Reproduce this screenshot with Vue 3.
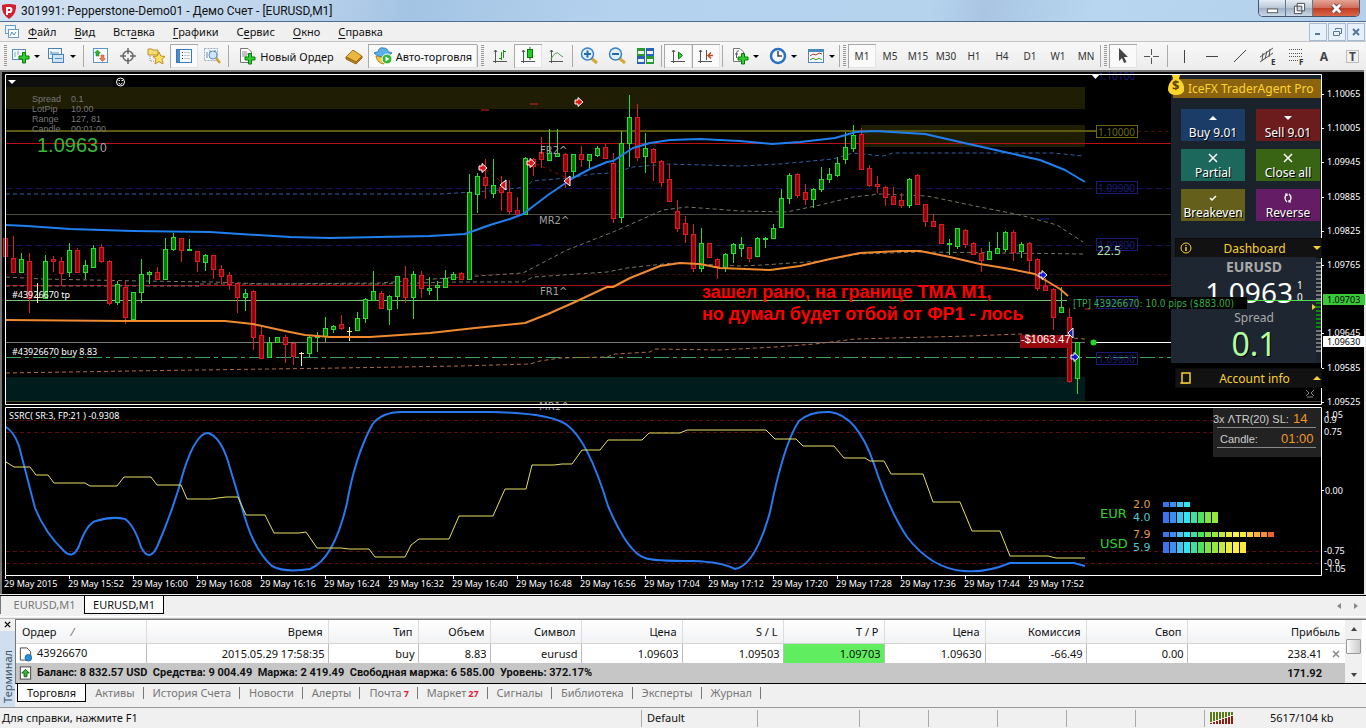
<script setup>
import { ref } from 'vue'

const menu = [['', 'Ф', 'айл'], ['', 'В', 'ид'], ['Вст', 'а', 'вка'], ['', 'Г', 'рафики'], ['С', 'е', 'рвис'], ['', 'О', 'кно'], ['', 'С', 'правка']]
const frames = ['M1', 'M5', 'M15', 'M30', 'H1', 'H4', 'D1', 'W1', 'MN']
const frame = ref('M1')

// colour, high, body top, body bottom, low
const raw = `r238,238,256,256 r236,258,272,273 g253,259,272,273 r253,261,298,313 y283,297,297,303 g255,261,298,299 r256,259,261,272 r257,261,273,286
g243,250,272,277 r248,250,272,273 g260,265,272,279 g245,248,267,267 r244,247,261,263 r260,261,303,305 g281,284,302,305 r281,287,317,324 g292,292,319,319
g259,274,292,303 g271,272,274,284 r267,272,279,280 g238,249,279,279 g233,237,249,251 r238,238,250,262 g239,249,250,251 r251,251,261,272 g254,255,262,271
r255,255,269,279 r265,269,276,284 r272,275,284,290 r283,283,297,313 g289,293,297,311 r290,291,337,350 r327,335,358,358 g337,342,357,358 g337,337,342,342
r335,337,344,363 r343,343,356,365 y352,353,353,366 g335,337,353,357 g332,336,337,352 g317,328,336,342 g325,326,329,333 r315,324,328,330 y327,331,331,341
g312,318,330,331 g298,299,318,323 g271,291,300,301 r291,293,308,308 g295,296,309,325 g276,276,296,309 r266,278,297,303 g271,274,297,319 r271,275,288,298
g277,288,290,295 g281,285,287,301 g270,278,287,287 g272,274,279,279 r272,273,279,280 g174,192,279,279 g173,176,194,213 r159,177,185,199 g159,185,193,198
r176,187,192,211 r180,192,211,214 r197,210,214,216 g157,158,214,215 r158,159,166,176 r137,152,159,168 g129,153,160,160 g129,153,156,157 r153,154,171,188
g154,154,171,177 r146,154,159,167 g154,154,160,169 g146,148,155,157 r144,147,158,158 r153,163,218,223 g131,143,217,223 g95,117,143,167 r104,117,157,161
g133,148,156,173 r148,149,162,181 r160,161,182,187 r164,179,201,201 r200,211,228,232 r216,223,234,243 r224,234,268,272 g228,243,268,272 r243,243,257,258
r258,259,266,279 g253,254,267,272 g243,244,253,263 g237,244,248,257 r247,247,258,262 g237,238,256,256 g237,238,239,248 g224,228,238,239 g189,198,227,227
g173,175,198,204 r173,174,195,198 r184,192,199,205 g188,189,199,208 g167,179,189,192 g168,174,179,183 g157,163,175,177 g132,147,159,164 g125,135,148,152
r128,134,169,169 r165,168,185,187 r176,184,186,193 r186,187,197,206 r187,196,204,205 r193,200,205,208 g178,179,205,208 r174,175,204,204 r204,204,221,227
r214,221,226,227 r224,224,243,244 g239,243,244,255 g228,228,246,249 r229,230,244,248 r242,243,254,254 r248,253,260,272 g242,251,259,260 g232,248,253,254
g231,232,249,252 r230,232,252,261 g242,244,251,258 r242,243,260,272 r258,259,288,291 r278,286,290,290 r288,289,317,330 g287,307,312,312 r308,317,381,383
g342,342,378,394`
const candles = raw.split(/\s+/).map((s, i) => {
  const [high, top, bottom, low] = s.slice(1).split(',').map(Number)
  return { x: 5 + i * 8, kind: s[0], high, top, low, h: Math.max(bottom - top, 1) }
})

const prices = [[94, '1.10065'], [128, '1.10005'], [162, '1.09945'], [197, '1.09885'], [231, '1.09825'], [265, '1.09765'], [333, '1.09645'], [368, '1.09585'], [402, '1.09525']]
const times = Array.from({ length: 17 }, (_, i) => {
  if (i === 0) return '29 May 2015'
  const m = 15 * 60 + 52 + (i - 1) * 8
  return `29 May ${Math.floor(m / 60)}:${String(m % 60).padStart(2, '0')}`
})
const rounds = [[132, '1.10000', '#6b6a10'], [188, '1.09900', '#1c1c78'], [245, '1.09800', '#1c1c78'], [303, '1.09700', '#1c1c78'], [359, '1.09600', '#1c1c78']]
const heat = ['#3c74ee', '#3a90f0', '#3cc4f4', '#30e4f0', '#3ce0a0', '#4ce060', '#7ce444', '#98e83c', '#c4e83c', '#e8ec40', '#fcf040', '#fce83c', '#fcd03c', '#f8b038', '#f09034', '#ee6434']
const meters = [[502, 5, 4], [512, 11, 8], [532, 5, 16], [542, 11, 12]]

const cols = [130, 182, 90, 72, 91, 101, 101, 101, 101, 101, 101]
const head = ['Время', 'Тип', 'Объем', 'Символ', 'Цена', 'S / L', 'T / P', 'Цена', 'Комиссия', 'Своп']
const row = ['2015.05.29 17:58:35', 'buy', '8.83', 'eurusd', '1.09603', '1.09503', '1.09703', '1.09630', '-66.49', '0.00']
const tabs = [['Торговля'], ['Активы'], ['История Счета'], ['Новости'], ['Алерты'], ['Почта', 7], ['Маркет', 27], ['Сигналы'], ['Библиотека'], ['Эксперты'], ['Журнал']]
</script>

<template>
  <div class="app">
    <header class="title">
      <svg class="logo" viewBox="0 0 16 16"><path d="M1 2Q8 0 15 2Q16 11 8 16Q0 11 1 2" fill="#d5202c" /><path d="M6 12V5H9.5Q11.500 7 9.500 9H6" fill="none" stroke="#fff" stroke-width="2" /></svg>
      <h1>301991: Pepperstone-Demo01 - Демо Счет - [EURUSD,M1]</h1>
      <div class="winbtns">
        <button aria-label="Свернуть"><svg viewBox="0 0 14 14"><rect x="1.500" y="7.500" width="11" height="4" fill="#fff" stroke="#555" /></svg></button>
        <button aria-label="Развернуть"><svg viewBox="0 0 14 14"><path d="M4.500 1.500H12.500V9.500H9.500V12.500H1.500V4.500H4.500Z" fill="#fff" stroke="#444" /><path d="M4.500 4.500H9.500V9.500H4.500Z" fill="#cdd8e4" stroke="#444" /></svg></button>
        <button class="close" aria-label="Закрыть"><svg viewBox="0 0 14 14"><path d="M3 3L11 11M11 3L3 11" stroke="#644" stroke-width="5" /><path d="M3 3L11 11M11 3L3 11" stroke="#fff" stroke-width="3" /></svg></button>
      </div>
    </header>

    <nav class="menu">
      <svg class="doc" viewBox="0 0 16 16"><rect x="1.500" y="1.500" width="10" height="8" fill="#eef6ff" stroke="#6a9cc8" /><rect x="4.500" y="5.500" width="10" height="8" fill="#fff" stroke="#6a9cc8" /><path d="M6 12L8 8L10 11L12 8" fill="none" stroke="#5588bb" /></svg>
      <button v-for="m in menu" :key="m.join('')">{{ m[0] }}<u>{{ m[1] }}</u>{{ m[2] }}</button>
      <div class="mdi">
        <button aria-label="Свернуть окно"><svg viewBox="0 0 12 12"><path d="M3 8H8" stroke="#56789a" stroke-width="2" /></svg></button>
        <button aria-label="Восстановить окно"><svg viewBox="0 0 12 12"><path d="M4.500 4V2.500H10.500V7.500H9M2.500 5.500H8.500V9.500H2.500Z" fill="none" stroke="#56789a" /></svg></button>
        <button aria-label="Закрыть окно"><svg viewBox="0 0 12 12"><path d="M3 3L9 9M9 3L3 9" stroke="#56789a" stroke-width="2" /></svg></button>
      </div>
    </nav>

    <div class="toolbar">
      <i class="grip first"></i>
      <button class="drop" aria-label="Новый график"><svg viewBox="0 0 20 20"><rect x="1.500" y="3.500" width="13" height="10" fill="#f4faff" stroke="#5a8fc0" /><path d="M4 6V11M7 5V9" stroke="#7aa" /><path d="M8 10H11.500V6.500H14.500V10H18V13H14.500V17H11.500V13H8Z" fill="#2fd12f" stroke="#0a7a0a" /></svg></button>
      <button class="drop" aria-label="Профили"><svg viewBox="0 0 20 20"><rect x="1.500" y="2.500" width="13" height="10" fill="#f0f8ff" stroke="#4a80b4" /><rect x="5.500" y="8.500" width="11" height="8" fill="#cfe4f8" stroke="#4a80b4" /><path d="M4 7H12M4 5V9M8 12.500H15" stroke="#5a8fc0" /></svg></button>
      <i class="sep"></i>
      <button aria-label="Обзор рынка"><svg viewBox="0 0 20 20"><rect x="3.500" y="2.500" width="14" height="14" fill="#fff" stroke="#5a94cc" /><path d="M7.500 4L10.500 7H9V10H6V7H4.500Z" fill="#30b030" stroke="#108010" stroke-width=".5" /><path d="M12.500 15.500L9.500 12.500H11V9H14V12.500H15.500Z" fill="#f08060" stroke="#c03010" stroke-width=".5" /></svg></button>
      <button aria-label="Окно данных"><svg viewBox="0 0 20 20"><circle cx="10" cy="10" r="5" fill="none" stroke="#666" stroke-width="1.500" /><path d="M10 2V8M10 12V18M2 10H8M12 10H18" stroke="#666" stroke-width="1.500" /></svg></button>
      <button aria-label="Навигатор"><svg viewBox="0 0 20 20"><path d="M2 3H6L7 4H12V9H2Z" fill="#f8dc70" stroke="#b89030" /><path d="M4 10V15H8" fill="none" stroke="#888" stroke-dasharray="1 1" /><path d="M13 6L14.800 10L19 10.500L16 13.200L17 18L13 15.500L9 18L10 13.200L7 10.500L11.200 10Z" fill="#ffe060" stroke="#c09020" /></svg></button>
      <button class="on" aria-label="Терминал"><svg viewBox="0 0 20 20"><rect x="2.500" y="3.500" width="15" height="13" fill="#f6fbff" stroke="#3a78c0" /><path d="M3 4H6V16H3Z" fill="#4a88d0" /><path d="M8 6.500H9M8 9.500H9M8 12.500H9" stroke="#333" /><path d="M10 6.500H16M10 9.500H16M10 12.500H16" stroke="#bcd" /></svg></button>
      <button aria-label="Тестер"><svg viewBox="0 0 20 20"><rect x="2.500" y="2.500" width="13" height="12" fill="#f4f8fc" stroke="#9ab" stroke-dasharray="2 1" /><path d="M5 12V6M8 9V4M13 8V4" stroke="#68a" /><circle cx="11" cy="9" r="4" fill="#cfe6fa" stroke="#5a8ac0" /><path d="M14 12L18 17" stroke="#d0a030" stroke-width="2.500" /></svg></button>
      <i class="sep"></i>
      <button class="wide"><svg viewBox="0 0 20 20"><path d="M3.500 2.500H11L14.500 6V16.500H3.500Z" fill="#fff" stroke="#777" /><path d="M5 6H10M5 8H12M5 10H10" stroke="#888" /><path d="M8 11H11.500V7.500H14.500V11H18V14H14.500V18H11.500V14H8Z" fill="#2fd12f" stroke="#0a7a0a" /></svg>Новый Ордер</button>
      <button aria-label="MetaEditor"><svg viewBox="0 0 20 20"><path d="M2 11L9 4L18 10L12 16Z" fill="#e8b840" stroke="#a87818" /><path d="M2 11V13L12 18L18 12V10L12 16Z" fill="#c08820" stroke="#946410" /></svg></button>
      <button class="wide on auto"><svg viewBox="0 0 20 20"><path d="M1 7Q3 6 5 6Q6 1 10 2Q15 2 15 6Q18 6 19 7Q15 11 10 11Q4 11 1 7" fill="#5ab0ea" stroke="#3880b8" /><path d="M3 10Q9 13 14 10L11 18Q4 17 3 10" fill="#f0c850" stroke="#b88820" /><circle cx="14" cy="13" r="5" fill="#30b830" stroke="#fff" /><path d="M12.500 10.500L16.500 13L12.500 15.500Z" fill="#fff" /></svg>Авто-торговля</button>
      <i class="grip"></i>
      <button aria-label="Бары"><svg viewBox="0 0 20 20"><path d="M5.500 4V17M3 15.500H17M4 6L5.500 4L7 6" stroke="#555" fill="none" /><path d="M9 12.500H11.500M11.500 6V14M13.500 4V12M13.500 5.500H16" stroke="#189018" /></svg></button>
      <button class="on" aria-label="Свечи"><svg viewBox="0 0 20 20"><path d="M5.500 4V17M3 15.500H17M4 6L5.500 4L7 6" stroke="#555" fill="none" /><path d="M12 1V14" stroke="#087808" /><rect x="9.500" y="3.500" width="5" height="8" fill="#20d020" stroke="#087808" /></svg></button>
      <button aria-label="Линия"><svg viewBox="0 0 20 20"><path d="M5.500 4V17M3 15.500H17M4 6L5.500 4L7 6" stroke="#555" fill="none" /><path d="M5 13Q10 4 13 8L17 11" fill="none" stroke="#50a050" /></svg></button>
      <i class="sep"></i>
      <button aria-label="Увеличить"><svg viewBox="0 0 20 20"><path d="M12 12L18 17" stroke="#d8a830" stroke-width="3" /><circle cx="8.500" cy="8" r="6" fill="#dff0ff" stroke="#3a80c8" stroke-width="1.500" /><path d="M5 8H12M8.500 4.500V11.500" stroke="#2468b0" stroke-width="2" /></svg></button>
      <button aria-label="Уменьшить"><svg viewBox="0 0 20 20"><path d="M12 12L18 17" stroke="#d8a830" stroke-width="3" /><circle cx="8.500" cy="8" r="6" fill="#dff0ff" stroke="#3a80c8" stroke-width="1.500" /><path d="M5 8H12" stroke="#2468b0" stroke-width="2" /></svg></button>
      <button aria-label="Окна плиткой"><svg viewBox="0 0 20 20"><path d="M2 2H10V10H2ZM11 10H19V18H11Z" fill="#2a9a30" /><path d="M11 2H19V10H11ZM2 10H10V18H2Z" fill="#2c60b8" /><path d="M3 5H9V8H3ZM12 5H18V8H12ZM3 13H9V16H3ZM12 13H18V16H12Z" fill="#e8f4ec" /></svg></button>
      <i class="sep"></i>
      <button class="on" aria-label="Автопрокрутка"><svg viewBox="0 0 20 20"><path d="M5.500 4V17M3 15.500H17M4 6L5.500 4L7 6" stroke="#555" fill="none" /><path d="M10.500 6L14.500 9.500L10.500 13Z" fill="#30d030" stroke="#108010" /></svg></button>
      <button class="on" aria-label="Сдвиг графика"><svg viewBox="0 0 20 20"><path d="M4.500 4V17M2 15.500H16M3 6L4.500 4L6 6M10.500 4V14" stroke="#555" fill="none" /><path d="M17 9.500H12M15 6.500L12 9.500L15 12.500" fill="none" stroke="#c04820" stroke-width="1.500" /></svg></button>
      <i class="sep"></i>
      <button class="drop mid" aria-label="Индикаторы"><svg viewBox="0 0 20 20"><path d="M3.500 2.500H10L13.500 6V15.500H3.500Z" fill="#fff" stroke="#777" /><path d="M9 5Q6.500 4 6.500 8V12M5 8H8" fill="none" stroke="#555" /><path d="M8 11H11.500V7.500H14.500V11H18V14H14.500V18H11.500V14H8Z" fill="#2fd12f" stroke="#0a7a0a" /></svg></button>
      <button class="drop mid" aria-label="Периоды"><svg viewBox="0 0 20 20"><circle cx="10" cy="10" r="7" fill="#f4faff" stroke="#2a70c0" stroke-width="2.500" /><path d="M10 5V10H14" fill="none" stroke="#444" stroke-width="1.500" /></svg></button>
      <button class="drop mid" aria-label="Шаблоны"><svg viewBox="0 0 20 20"><rect x="2.500" y="3.500" width="15" height="13" fill="#fff" stroke="#4a88c0" /><path d="M3 5H17" stroke="#4a88c0" stroke-width="2" /><path d="M4 10L7 8L10 9L13 7L16 8" fill="none" stroke="#b03030" /><path d="M4 14L7 12L10 14L13 12L16 14" fill="none" stroke="#309030" /></svg></button>
      <i class="grip"></i>
      <button v-for="f in frames" :key="f" class="tf" :class="{ on: f === frame }" @click="frame = f">{{ f }}</button>
      <i class="grip"></i>
      <button class="on" aria-label="Курсор"><svg viewBox="0 0 20 20"><path d="M6 2L15 11H11L13.500 16L11 17L9 12L6 15Z" fill="#444" /></svg></button>
      <button aria-label="Перекрестие"><svg viewBox="0 0 20 20"><path d="M10.500 3V9M10.500 12V18M3 10.500H9M12 10.500H18" stroke="#555" /></svg></button>
      <i class="sep"></i>
      <button aria-label="Вертикальная линия"><svg viewBox="0 0 20 20"><path d="M10.500 4V17" stroke="#444" /></svg></button>
      <button aria-label="Горизонтальная линия"><svg viewBox="0 0 20 20"><path d="M4 10.500H16" stroke="#444" /></svg></button>
      <button aria-label="Трендовая линия"><svg viewBox="0 0 20 20"><path d="M4 16L16 4" stroke="#444" /></svg></button>
      <button aria-label="Канал"><svg viewBox="0 0 20 20"><path d="M2 11L15 2M2 16L15 7M5 7L4 15M9 5L7 13M12 3L11 11" stroke="#555" /><text x="13" y="19" font-size="8" font-weight="700" fill="#333">E</text></svg></button>
      <button aria-label="Фибоначчи"><svg viewBox="0 0 20 20"><path d="M3 3.500H17M3 7.500H17M3 10.500H17M3 14.500H12" stroke="#555" stroke-dasharray="1 1" /><text x="13" y="19" font-size="8" font-weight="700" fill="#333">F</text></svg></button>
      <button class="letter" aria-label="Текст">A</button>
      <button aria-label="Метка"><svg viewBox="0 0 20 20"><rect x="4.500" y="4.500" width="12" height="12" fill="none" stroke="#888" stroke-dasharray="1 1" /><text x="7" y="15" font-size="12" font-weight="700" fill="#444">T</text></svg></button>
    </div>

    <main class="chart">
      <svg class="plot" viewBox="0 70 1366 526">
        <rect y="70" width="1366" height="526" fill="#e8e8e8" />
        <rect y="70" width="1364" height="2" fill="#777" /><rect y="70" width="2" height="524" fill="#777" />
        <rect x="2" y="72" width="1362" height="522" fill="#000" />
        <rect y="595" width="1366" height="1" fill="#000" />

        <rect x="6" y="87" width="1079" height="22" fill="#1f1d04" />
        <rect x="861" y="125" width="224" height="22" fill="#1f1d04" />
        <rect x="6" y="377" width="1079" height="24" fill="#001c1c" />
        <g fill="none">
          <path d="M6 131H1096" stroke="#5c5a10" stroke-width="2" />
          <path d="M1137 131.500H1171" stroke="#420c0c" stroke-dasharray="4 3" />
          <path d="M6 143.500H1171" stroke="#b81014" />
          <path d="M6 188.500H1171M6 245.500H1171" stroke="#141456" stroke-dasharray="6 4" />
          <path d="M6 214.500H1171" stroke="#4c4c38" />
          <path d="M6 274.500H1171" stroke="#420c0c" stroke-dasharray="3 3" />
          <path d="M6 285.500H1171" stroke="#a80e1a" />
          <path d="M6 300.500H1067" stroke="#74c474" />
          <path d="M6 342.500H1085" stroke="#777" />
          <path d="M1093 342.500H1171" stroke="#fff" />
          <path d="M6 357.500H1171" stroke="#3aa458" stroke-dasharray="15 4 4 4" />
          <path d="M6 401.500H1321" stroke="#4a4224" />
          <g stroke-dasharray="4 3">
            <path d="M6 194L440 194L490 191L527 187L532 181L567 178L593 174L613 173L633 167L667 164L740 166L780 164L833 159L853 153L883 156L893 153L1053 153L1083 156" stroke="#3060a8" />
            <path d="M6 277L43 279L140 281L213 282L267 284L380 283L447 278L523 273L567 250L613 232L663 210L687 207L740 211L787 212L820 205L853 197L880 194L927 196L980 207L1020 215L1057 225L1083 242" stroke="#777768" />
            <path d="M6 286L200 286M200 284L380 284L457 282L523 282L533 277L607 272L627 268L673 263L740 266L763 265L820 261L860 254L920 252L1083 254" stroke="#777768" />
            <path d="M6 373L130 371L340 368L460 366L530 364L540 361L560 358L607 357L615 354L650 352L655 349L720 350L775 347L815 344L855 339L970 336L1020 334L1085 339" stroke="#b06c40" />
          </g>
          <path d="M530 161L567 178M486 170L503 183" stroke="#8a1010" stroke-dasharray="3 4" />
        </g>

        <g v-for="c in candles" :key="c.x" :stroke="{ r: '#d81c24', g: '#30d830', y: '#fff080' }[c.kind]" :fill="c.kind === 'r' ? '#90060c' : '#067c06'">
          <path :d="`M${c.x + .5} ${c.high}V${c.low}`" />
          <path v-if="c.kind === 'y'" :d="`M${c.x - 2} ${c.top + .5}H${c.x + 3}`" />
          <rect v-else :x="c.x - 1.5" :y="c.top + .5" width="4" :height="c.h" />
        </g>

        <g fill="none" stroke-linejoin="round">
          <path stroke="#2080f0" stroke-width="2" d="M6 225L27 226L70 229L133 231L210 232L240 234L290 237L330 238L380 237L430 236L465 234L490 225L510 219L523 214L548 195L573 178L590 169L607 162L613 161L633 148L650 143L670 140L700 139L740 141L772 144L800 142L835 138L856 132L875 131L925 134L960 142L1000 151L1040 160L1065 170L1085 182" />
          <path stroke="#f08a30" stroke-width="2" d="M6 320L125 321L225 321L253 324L285 331L305 335L330 337L370 337L400 335L430 333L475 328L525 323L548 314L575 302L607 287L613 287L630 278L660 266L680 263L700 264L720 268L770 270L800 266L830 259L860 253L900 251L920 251L950 257L980 264L1010 269L1035 274L1045 280L1060 289L1068 296" />
        </g>
        <path d="M481 110H489M530 104H538M1085 309H1090" stroke="#e02020" /><path d="M531 245H541M1040 219H1049" stroke="#1818a0" />

        <g v-for="p in [[483, 168], [531, 163], [579, 102]]" :key="p[0]" :transform="`translate(${p[0]} ${p[1]})`"><path d="M-4 -2V2H-1V4.500L4 0L-1 -4.500V-2Z" fill="#e01818" stroke="#fff" /></g>
        <g v-for="p in [[503, 185], [567, 181]]" :key="p[0]" :transform="`translate(${p[0]} ${p[1]})`"><path d="M-3 0L3 -5V5Z" fill="#d01818" stroke="#fff" /></g>

        <g class="pivot"><text x="540" y="154">FR2^</text><text x="539" y="224">MR2^</text><text x="540" y="295">FR1^</text><text x="539" y="410">MR1^</text></g>
        <g class="axis"><text x="12" y="298">#43926670 tp</text><text x="12" y="355">#43926670 buy 8.83</text></g>
        <g class="note"><text x="702" y="298">зашел рано, на границе ТМА М1,</text><text x="702" y="320">но думал будет отбой от ФР1 - лось</text></g>

        <rect x="6" y="77" width="107" height="10" fill="#0e0e10" />
        <path d="M8 80H16L12 84Z" fill="#fff" /><path d="M1091 74H1100L1095.500 79Z" fill="#fff" />
        <circle cx="120.500" cy="82" r="4" fill="none" stroke="#fff" /><path d="M118.500 80.500H120M121.500 80.500H123M118.500 83Q120.500 86 122.500 83" fill="none" stroke="#fff" />
        <g class="info">
          <text x="32" y="102">Spread</text><text x="71" y="102">0.1</text><text x="32" y="112">LotPip</text><text x="71" y="112">10.00</text>
          <text x="32" y="122">Range</text><text x="71" y="122">127, 81</text><text x="32" y="132">Candle</text><text x="71" y="132">00:01:00</text>
        </g>
        <text class="bid" x="37" y="152">1.0963</text><text class="bid-small" x="100" y="152">0</text>

        <g v-for="r in rounds" :key="r[1]"><rect x="1096.500" :y="r[0] - 6.5" width="41" height="12" fill="none" :stroke="r[2]" /><text x="1098" :y="r[0] + 4" class="round" :fill="r[2]">{{ r[1] }}</text></g>
        <text class="round" x="1098" y="80" fill="#1c1c78">1.10100</text>
        <text x="1097" y="255" class="pips">22.5</text>

        <rect x="1020" y="335" width="51" height="13" fill="#96080e" /><text x="1021" y="343" class="loss">-$1063.47</text>
        <g v-for="p in [[1043, 275], [1075, 357]]" :key="p[0]" :transform="`translate(${p[0]} ${p[1]})`"><path d="M-4 -2V2H-1V4.500L4 0L-1 -4.500V-2Z" fill="#1818d0" stroke="#fff" /></g>
        <path d="M1068 333L1073 328V338Z" fill="#1818d0" stroke="#fff" />
        <circle cx="1093.500" cy="342.500" r="3" fill="#20d820" />

        <rect x="2" y="405" width="1319" height="3" fill="#000" />
        <g fill="none" stroke-width="1">
          <path d="M6 420.500H1321M6 432.500H1321M6 551.500H1321M6 563.500H1321" stroke="#5c0c14" stroke-dasharray="4 3" />
          <path stroke="#2878f0" stroke-width="2" d="M6 427Q14 432 19 446L35 508Q45 533 64 551Q73 560 79 546Q87 523 96 521Q112 516 125 519Q134 525 141 547Q149 563 157 547Q174 508 184 470Q196 433 208 433Q219 436 227 458L245 518Q255 551 272 566Q285 573 310 569Q334 559 347 503Q355 457 372 425Q381 412 402 412L490 412Q550 413 567 425Q588 440 608 506Q628 553 645 558Q652 561 693 561Q722 562 735 569Q755 566 770 512Q784 443 799 421Q810 411 830 412Q857 415 874 464Q889 510 907 537Q932 569 964 571Q986 573 1010 563H1074L1085 566" />
          <path stroke="#e8e060" d="M6 462L14 467H30L36 475H48L54 483H85L90 486H117L124 477H151L157 485H181L187 499H211L218 498L226 497H238L246 515H265L274 533H299L306 532L317 548H341L349 549H369L375 557H405L411 545L419 539H440L449 539L459 516H493L505 489H526L532 465H554L562 464H572L582 450H600L608 440H632L642 440L649 433H680L687 430H766L775 439H796L803 446H834L844 458H865L870 461H884L891 474H923L933 502H960L972 531H1000L1010 556H1048L1056 558H1085" />
          <path stroke="#fff" d="M5.500 404.500V74.500H1321.500V404.500ZM5.500 575.500V407.500H1321.500V575.500Z" />
          <path stroke="#fff" d="M1321 490.500H1324" />
        </g>
        <g class="axis">
          <text x="9" y="419">SSRC( SR:3, FP:21 ) -0.9308</text>
          <g v-for="p in prices" :key="p[0]"><path :d="`M1322 ${p[0] + .5}H1324`" stroke="#fff" /><text x="1327" :y="p[0] + 3">{{ p[1] }}</text></g>
          <rect x="1323" y="294" width="42" height="11" fill="#38c838" /><text class="dark" x="1327" y="303">1.09703</text>
          <rect x="1323" y="336" width="42" height="11" fill="#fff" /><text class="dark" x="1327" y="345">1.09630</text>
          <text x="1325" y="418">1.05</text><text x="1324" y="423">0.9</text><text x="1324" y="435">0.75</text><text x="1325" y="494">0.00</text><text x="1324" y="554">-0.75</text><text x="1324" y="566">-0.9</text><text x="1325" y="572">-1.05</text>
          <g v-for="(t, i) in times" :key="t"><text :x="4 + i * 64" y="587">{{ t }}</text><path :d="`M${5.5 + i * 64} 576V579`" stroke="#fff" /></g>
        </g>

        <g class="cur"><text x="1100" y="518">EUR</text><text x="1100" y="548">USD</text></g>
        <g class="strength"><text x="1133" y="508" fill="#e09a48">2.0</text><text x="1133" y="521" fill="#50c8d0">4.0</text><text x="1133" y="538" fill="#e09a48">7.9</text><text x="1133" y="551" fill="#50c8d0">5.9</text></g>
        <g v-for="m in meters" :key="m[0]"><rect v-for="n in m[2]" :key="n" :x="1156 + n * 7" :y="m[0]" width="6" :height="m[1]" :fill="heat[n - 1]" /></g>
        <rect x="1213" y="408" width="108" height="49" fill="#222" />
        <g class="atr"><text x="1213" y="423">3x ΛTR(20) SL:</text><text x="1220" y="443">Candle:</text><text class="num" x="1293" y="423">14</text><text class="num" x="1281" y="443">01:00</text></g>
        <path d="M1217 427.500H1316M1217 447.500H1316" stroke="#888" />
      </svg>

      <aside class="agent">
        <div class="agent-title"><svg viewBox="0 0 18 22"><path d="M5 1H13L12 5Q18 9 17 17Q15 21 9 21Q2 21 1 16Q1 9 6 5Z" fill="#fcd42c" /><text x="5" y="16" font-size="13" font-weight="700" fill="#5a4208">$</text></svg>IceFX TraderAgent Pro</div>
        <div class="agent-grid">
          <button class="buy"><svg viewBox="0 0 12 12"><path d="M2 8L6 4L10 8Z" fill="#fff" /></svg>Buy 9.01</button>
          <button class="sell"><svg viewBox="0 0 12 12"><path d="M2 4H10L6 8Z" fill="#fff" /></svg>Sell 9.01</button>
          <button class="partial"><svg viewBox="0 0 12 12"><path d="M2 2L10 10M10 2L2 10" stroke="#fff" stroke-width="1.500" /></svg>Partial</button>
          <button class="all"><svg viewBox="0 0 12 12"><path d="M2 2L10 10M10 2L2 10" stroke="#fff" stroke-width="1.500" /></svg>Close all</button>
          <button class="even"><svg viewBox="0 0 12 12"><path d="M3 6L5 8L9 4" fill="none" stroke="#fff" stroke-width="1.500" /></svg>Breakeven</button>
          <button class="rev"><svg viewBox="0 0 12 12"><path d="M5 2Q1 6 5 10M7 2Q11 6 7 10M3 2H5V4M9 10H7V8" fill="none" stroke="#fff" stroke-width="1.200" /></svg>Reverse</button>
        </div>
        <button class="fold"><svg viewBox="0 0 12 12"><circle cx="6" cy="6" r="5" fill="none" stroke="#f8d030" /><path d="M6 3V4M6 5V9" stroke="#f8d030" stroke-width="1.500" /></svg><span>Dashboard</span><svg class="arr" viewBox="0 0 8 8"><path d="M0 2H8L4 6Z" fill="#f8d030" /></svg></button>
        <div class="dash">
          <b>EURUSD</b>
          <div class="quote">1.0963<span>1<br>0</span></div>
          <p>Spread</p>
          <strong>0.1</strong>
        </div>
        <button class="fold info-fold"><svg viewBox="0 0 12 12"><path d="M2 1H10V11H2Z" fill="none" stroke="#f8d030" stroke-width="1.500" /><path d="M1 10V12H8" stroke="#f8d030" fill="none" /></svg><span>Account info</span><svg class="arr" viewBox="0 0 8 8"><path d="M0 6H8L4 2Z" fill="#f8d030" /></svg></button>
      </aside>

      <svg class="plot over" viewBox="0 70 1366 526">
        <g><rect v-for="n in 23" :key="n" x="1316" :y="258 + n * 4" width="5" height="2" :fill="n > 10 && n < 18 ? '#0a8a0a' : '#777'" /></g>
        <path d="M1312 304V310L1316 307Z" fill="#e8d020" />
        <rect x="1171" y="297" width="76" height="12" fill="#020402" /><path d="M1247 300.500H1321" stroke="#50e050" />
        <text class="tp" x="1073" y="307">[TP] 43926670: 10.0 pips ($883.00)</text>
        <path d="M1306 390L1309 393L1306 396M1314 390L1311 393L1314 396M1307 397H1313" fill="none" stroke="#888" />
      </svg>
    </main>

    <div class="chart-tabs"><button>EURUSD,M1</button><button class="active">EURUSD,M1</button><span class="scroll"><svg viewBox="0 0 6 8"><path d="M5 1V7L1 4Z" fill="#888" /></svg><svg viewBox="0 0 6 8"><path d="M1 1V7L5 4Z" fill="#888" /></svg></span></div>

    <section class="terminal">
      <div class="side"><button aria-label="Закрыть терминал"><svg viewBox="0 0 8 8"><path d="M1 1L7 7M7 1L1 7" stroke="#000" stroke-width="1.500" /></svg></button><span>Терминал</span></div>
      <div class="orders">
        <div class="grid">
          <table>
            <colgroup><col v-for="(c, i) in cols" :key="i" :style="{ width: c + 'px' }"><col></colgroup>
            <thead><tr><th class="left">Ордер<em>/</em></th><th v-for="(h, i) in head" :key="i">{{ h }}</th><th class="profit">Прибыль</th></tr></thead>
            <tbody>
              <tr><td class="left"><svg viewBox="0 0 16 16"><path d="M2.500 1.500H9.500L13.500 5.500V14.500H2.500Z" fill="#fff" stroke="#444" /><circle cx="11" cy="12" r="3.500" fill="#2a90d8" stroke="#1a68a8" /></svg>43926670</td><td v-for="(v, i) in row" :key="i" :class="{ hit: i === 6 }">{{ v }}</td><td class="profit">238.41<button aria-label="Закрыть ордер"><svg viewBox="0 0 8 8"><path d="M1 1L7 7M7 1L1 7" stroke="#888" stroke-width="1.500" /></svg></button></td></tr>
              <tr class="sum"><td colspan="11" class="left"><svg viewBox="0 0 16 16"><rect x="2.500" y="1.500" width="11" height="13" fill="#fff" stroke="#444" /><path d="M8 4L12 8H9.500V12H6.500V8H4Z" fill="#3ab83a" stroke="#0a600a" /></svg>Баланс: 8 832.57 USD&nbsp; Средства: 9 004.49&nbsp; Маржа: 2 419.49&nbsp; Свободная маржа: 6 585.00&nbsp; Уровень: 372.17%</td><td class="profit total">171.92</td></tr>
            </tbody>
          </table>
          <div class="bar"><svg viewBox="0 0 8 6"><path d="M1 5L4 1L7 5Z" fill="#444" /></svg><i></i><svg class="end" viewBox="0 0 8 6"><path d="M1 1L4 5L7 1Z" fill="#444" /></svg></div>
        </div>
        <div class="tabs"><button v-for="(t, i) in tabs" :key="t[0]" :class="{ active: i === 0 }">{{ t[0] }}<b v-if="t[1]">{{ t[1] }}</b></button></div>
      </div>
    </section>

    <footer><span class="help">Для справки, нажмите F1</span><span class="c1">Default</span><span class="c2"></span><span v-for="n in 5" :key="n" class="c3"></span><span class="net"><svg viewBox="0 0 24 14"><g v-for="n in 8" :key="n"><rect :x="n * 3 - 3" y="1" width="2" :height="11 - n" fill="#5a7a18" /><rect :x="n * 3 - 3" :y="13 - n" width="2" :height="n" fill="#8a2010" /></g></svg>5617/104 kb</span></footer>
  </div>
</template>

<style>
body { margin: 0; background: #f0f0f0; }
</style>

<style scoped>
.app { min-height: 100vh; display: flex; flex-direction: column; font-family: "Noto Sans", "Open Sans", sans-serif; font-size: 11px; color: #111; background: #f0f0f0; overflow: hidden; }
button { font: inherit; color: inherit; border: 0; background: none; padding: 0; margin: 0; }
.title { height: 21px; display: flex; align-items: center; background: linear-gradient(100deg, #d2e2f2 0, #bfd5ec 20%, #a4c4e4 30%, #b4d2ee 45%, #b6d3ee 68%, #a9c5e2 72%, #b8d6f0 80%, #b4d0ec); border-bottom: 1px solid #4d6c90; }
.logo { width: 16px; height: 16px; margin-left: 1px; }
.title h1 { font-family: Roboto, "Noto Sans", sans-serif; font-size: 12px; font-weight: 400; margin: 0 0 0 4px; flex: 1; }
.winbtns { display: flex; align-self: flex-start; margin-right: 6px; border: 1px solid #47566a; border-top: 0; border-radius: 0 0 5px 5px; overflow: hidden; }
.winbtns button { width: 27px; height: 16px; display: grid; place-items: center; background: linear-gradient(#e4ecf4, #b8c6d6 50%, #9fb0c4 50%, #c8d8e8); border-right: 1px solid #66788c; }
.winbtns .close { width: 46px; border: 0; background: linear-gradient(#e4a494, #d06c58 50%, #c03a22 50%, #d86848); }
.winbtns svg { width: 13px; height: 13px; }
.menu { height: 19px; display: flex; align-items: center; border-bottom: 1px solid #c4c4c4; }
.menu .doc { width: 16px; height: 16px; margin: 0 2px 0 4px; }
.menu > button { padding: 0; margin-left: 6px; margin-right: 12px; white-space: nowrap; }
.menu u { text-underline-offset: 2px; }
.mdi { margin-left: auto; display: flex; gap: 1px; margin-right: 1px; }
.mdi button { width: 18px; height: 18px; display: grid; place-items: center; border: 1px solid #a4bcd4; background: #e6f1fb; }
.mdi svg { width: 12px; height: 12px; }
.toolbar { height: 28px; display: flex; align-items: center; background: linear-gradient(#f8f8f8, #ececec); }
.toolbar > button { width: 28px; height: 24px; display: flex; align-items: center; justify-content: center; flex: none; }
.toolbar svg { width: 20px; height: 20px; flex: none; }
.toolbar .on { background: #fafafa; box-shadow: inset 1px 1px #a8a8a8, inset -1px -1px #e4e4e4; }
.toolbar .drop { width: 36px; justify-content: flex-start; padding-left: 2px; gap: 3px; }
.toolbar .mid { width: 38px; padding-left: 5px; }
.drop::after { content: ""; border: 3px solid transparent; border-top-color: #000; border-bottom: 0; }
.toolbar .wide { width: 109px; gap: 3px; white-space: nowrap; }
.toolbar .tf { font-size: 10px; color: #333; }
.toolbar .letter { font-size: 12px; font-weight: 700; color: #444; }
.sep { width: 5px; height: 22px; flex: none; background: linear-gradient(#aaa, #aaa) 2px 0 / 1px 100% no-repeat; }
.grip { width: 8px; height: 22px; flex: none; border-left: 1px solid #aaa; background: repeating-linear-gradient(#999 0 1px, transparent 1px 2px) 3px 0 / 3px 100% no-repeat; }
.grip.first { border-color: transparent; }

.chart { position: relative; }
.plot { display: block; width: 100%; height: auto; }
.over { position: absolute; inset: 0; pointer-events: none; }
.axis text { font-size: 9px; fill: #fff; }
.axis .dark { fill: #000; }
.pivot text { font: 10px "DejaVu Sans", sans-serif; fill: #a0a0a0; }
.note text { font: bold 18px "Liberation Sans", sans-serif; fill: #f00; }
.info text { font: 9px "Liberation Sans", sans-serif; fill: #777; }
.bid { font: 20px "Liberation Sans", sans-serif; fill: #38b838; }
.bid-small { font: 12px "Liberation Sans", sans-serif; fill: #aaa; }
.round { font-size: 10px; }
.pips { font-size: 12px; fill: #a8dcb0; }
.loss { font: 11px "Liberation Sans", sans-serif; fill: #fff; }
.cur text { font: 13px "DejaVu Sans", sans-serif; fill: #2cd42c; }
.strength text { font: 11px "DejaVu Sans", sans-serif; }
.atr text { font: 11px "Liberation Sans", sans-serif; fill: #ccc; }
.atr .num { font-size: 13px; fill: #f09428; }
.tp { font: 10px "DejaVu Sans Condensed", "DejaVu Sans", sans-serif; fill: #3aa84a; }

.agent { position: absolute; top: 5px; right: 45px; width: 150px; background: linear-gradient(#1a222c, #1a222c) 0 0 / 100% 288px no-repeat; font-size: 12px; }
.agent-title { height: 19px; margin: 4px 0 11px 2px; padding-left: 15px; background: #8c6410; color: #fcd42c; line-height: 19px; white-space: nowrap; position: relative; }
.agent-title svg { position: absolute; left: -6px; top: -5px; width: 18px; height: 22px; }
.agent-grid { display: grid; grid-template-columns: 64px 64px; gap: 8px 11px; padding-left: 10px; }
.agent-grid button { height: 32px; display: flex; flex-direction: column; align-items: center; justify-content: space-between; color: #fff; line-height: 16px; padding-top: 3px; text-shadow: 1px 1px #000; white-space: nowrap; }
.agent-grid svg { width: 12px; height: 12px; flex: none; }
.buy { background: #1c3c68; } .sell { background: #6c1c1c; } .partial { background: #1c685c; }
.all { background: #386414; } .even { background: #64601c; } .rev { background: #641c64; }
.agent .fold { width: 145px; height: 18px; margin: 18px 0 0 5px; padding: 0 0 0 4px; display: flex; align-items: center; background: #121212; color: #f8d030; box-shadow: 0 0 0 1px #0c0c0c; }
.fold span { flex: 1; padding-left: 4px; }
.fold svg { width: 12px; height: 12px; }
.fold .arr { width: 8px; height: 8px; }
.dash { height: 106px; text-align: center; background: #1e2731; color: #aaa; overflow: hidden; margin-right: 5px; padding-left: 21px; box-sizing: border-box; }
.dash b { display: block; font-size: 14px; line-height: 20px; }
.quote { color: #fff; font-size: 28px; line-height: 30px; height: 32px; display: flex; justify-content: center; gap: 4px; }
.quote span { font-size: 10px; line-height: 12px; padding-top: 2px; }
.dash p { margin: 0; font-size: 12px; line-height: 18px; }
.dash strong { display: block; color: #b4fca0; font-size: 32px; font-weight: 400; line-height: 34px; text-shadow: 1px 1px #000; }
.agent .info-fold { margin-top: 6px; }

.chart-tabs { height: 20px; display: flex; color: #777; border-bottom: 1px solid #fff; }
.chart-tabs button { width: 84px; height: 18px; line-height: 16px; padding-left: 4px; border-left: 1px solid #777; }
.chart-tabs .active { width: 80px; padding: 0; color: #111; background: #fff; border: 1px solid #000; border-top: 0; }
.scroll { margin-left: auto; display: flex; align-items: center; gap: 11px; padding-right: 7px; }
.scroll svg { width: 6px; height: 8px; }
.terminal { flex: 1; display: flex; border-top: 1px solid #bbb; margin-top: 1px; }
.side { width: 15px; display: flex; flex-direction: column; align-items: center; gap: 4px; background: linear-gradient(#f0f0f0 12px, #cfdff0 12px); }
.side button { height: 11px; display: grid; place-items: center; }
.side svg { width: 7px; height: 7px; }
.side span { writing-mode: vertical-rl; transform: rotate(180deg); color: #456; margin-top: auto; margin-bottom: 4px; line-height: 14px; }
.orders { flex: 1; min-width: 0; display: flex; flex-direction: column; }
.grid { display: flex; border: 1px solid #777; border-right: 0; border-bottom: 1px solid #000; background: #fff; }
table { flex: 1; min-width: 0; table-layout: fixed; border-collapse: collapse; white-space: nowrap; }
th { height: 23px; padding: 0 5px 0 0; font-weight: 400; text-align: right; border-right: 1px solid #ddd; border-bottom: 1px solid #d4d4d4; background: linear-gradient(#fff, #f1f2f4); }
th em { margin-left: 14px; color: #777; }
td { height: 19px; padding: 0 3px 0 0; text-align: right; border-right: 1px solid #bbb; }
.left { text-align: left; }
th.left { padding-left: 6px; }
td.left { padding-left: 2px; }
td.left svg { width: 15px; height: 16px; margin-right: 4px; vertical-align: middle; }
td.hit { background: #60ee60; }
.profit { border-right: 0; padding-right: 5px; }
.profit button { margin-left: 10px; }
.profit svg { width: 8px; height: 8px; }
.sum td { background: #c6c6c6; font-family: Roboto, "Noto Sans", sans-serif; font-weight: 700; height: 20px; border: 0; }
.profit.total { padding-right: 23px; }
.bar { width: 17px; margin-right: 4px; display: flex; flex-direction: column; align-items: center; background: #f0f0f0; padding: 6px 0 5px; box-sizing: border-box; }
.bar svg { width: 8px; height: 6px; }
.bar i { width: 13px; height: 13px; margin-top: 7px; border: 1px solid #999; background: linear-gradient(90deg, #fafafa, #ccc); border-radius: 1px; }
.bar .end { margin-top: auto; }
.tabs { display: flex; align-items: flex-start; color: #777; line-height: 17px; }
.tabs button { padding: 0 9px; position: relative; white-space: nowrap; }
.tabs button:not(.active)::after { content: ""; position: absolute; right: 0; top: 3px; height: 12px; border-right: 1px solid #777; }
.tabs .active { margin-left: 2px; background: #fff; color: #111; border: 1px solid #000; border-top: 0; }
.tabs b { margin-left: 2px; color: #d8203c; font-size: 9px; }
footer { height: 20px; display: flex; align-items: center; border-top: 1px solid #999; }
footer span { height: 17px; line-height: 16px; box-sizing: border-box; border-left: 1px solid #aaa; padding-left: 5px; white-space: nowrap; }
footer .help { flex: 1; border: 0; padding-left: 2px; }
.c1 { width: 116px; } .c2 { width: 102px; } .c3 { width: 69px; }
.net { width: 162px; display: flex; align-items: center; gap: 36px; }
.net svg { width: 24px; height: 14px; }
</style>
